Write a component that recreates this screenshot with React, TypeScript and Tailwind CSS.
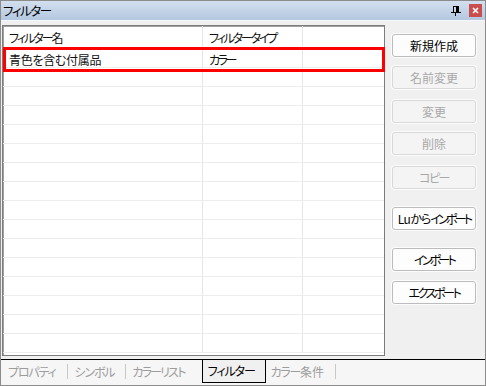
const font = "[font-family:'Noto_Sans_CJK_JP',sans-serif] [font-feature-settings:'palt']";

const rows = Array.from({ length: 15 });

function Btn(props: { children: React.ReactNode; disabled?: boolean; mt: string }) {
  return (
    <div
      className={`${props.mt} h-[23px] w-[84px] rounded-[3px] border flex items-center justify-center text-[12px] whitespace-nowrap shadow-[0_0_0_1px_#fcfcfc] ${
        props.disabled
          ? "border-[#d9d9d9] bg-[#f4f4f4] text-[#a8a8a8]"
          : "border-[#bcbcbc] bg-[#fdfdfd] text-black"
      }`}
    >
      {props.children}
    </div>
  );
}

function Sep(props: { ml: string; mr: string }) {
  return <div className={`${props.ml} ${props.mr} w-px h-[15px] bg-[#c8c8c8]`} />;
}

export default function App() {
  return (
    <div className={`w-[486px] h-[386px] border border-[#8c8c8c] flex flex-col bg-[#f0f0f0] ${font}`}>
      {/* title bar */}
      <div className="h-[20px] shrink-0 flex items-center bg-gradient-to-b from-[#d3dfee] to-[#b4c8e1] border-b border-[#f4f7fb] pl-[2px] pr-[3px]">
        <span className="pt-[1px] text-[12.5px] text-black leading-none tracking-[-1.4px]">フィルター</span>
        <div className="ml-auto flex items-center gap-[8px]">
          <svg width="10" height="10" viewBox="0 0 10 10">
            <rect x="2.5" y="0.5" width="5" height="6" fill="none" stroke="#000" />
            <rect x="5" y="1" width="2" height="5" fill="#000" />
            <rect x="0" y="6" width="10" height="1" fill="#000" />
            <rect x="4" y="7" width="1" height="3" fill="#000" />
          </svg>
          <div className="w-[13px] h-[13px] bg-[#c94f4f] flex items-center justify-center">
            <svg width="7" height="7" viewBox="0 0 7 7">
              <path d="M1 1 L6 6 M6 1 L1 6" stroke="#fff" strokeWidth="1.6" />
            </svg>
          </div>
        </div>
      </div>

      {/* main */}
      <div className="flex-1 flex pt-[4px] pl-[1px]">
        <div className="relative w-[383px] h-[331px] border border-[#7c7c7c] shadow-[inset_1px_1px_0_#a0a0a0] bg-white">
          <div className="flex h-[23px] border-b border-[#ececec] text-[12px] text-[#111]">
            <div className="w-[200px] pl-[6px] pt-[1px] flex items-center border-r border-[#e6e6e6]">
              <span className="tracking-[-2px]">フィルター</span>名
            </div>
            <div className="w-[100px] pl-[6px] pt-[1px] flex items-center border-r border-[#e6e6e6] tracking-[-2.2px]">フィルタータイプ</div>
            <div className="flex-1" />
          </div>
          <div className="flex h-[19px] border-b border-[#ececec] text-[12px] text-[#111]">
            <div className="w-[200px] pl-[6px] pt-[3px] flex items-center border-r border-[#e6e6e6] tracking-[-0.3px]">青色を含む付属品</div>
            <div className="w-[100px] pl-[6px] pt-[3px] flex items-center border-r border-[#e6e6e6] tracking-[-2.5px]">カラー</div>
            <div className="flex-1" />
          </div>
          {rows.map((_, i) => (
            <div key={i} className="flex h-[19px] border-b border-[#ececec]">
              <div className="w-[200px] border-r border-[#e6e6e6]" />
              <div className="w-[100px] border-r border-[#e6e6e6]" />
              <div className="flex-1" />
            </div>
          ))}
          <div className="absolute left-0 right-[-1px] top-[21px] h-[25px] border-[3px] border-[#ff0000]" />
        </div>

        <div className="flex flex-col pl-[7px] pt-[9px]">
          <Btn mt="mt-0">新規作成</Btn>
          <Btn disabled mt="mt-[9px]">名前変更</Btn>
          <Btn disabled mt="mt-[11px]">変更</Btn>
          <Btn disabled mt="mt-[9px]">削除</Btn>
          <Btn disabled mt="mt-[11px]">
            <span className="tracking-[-1.5px]">コピー</span>
          </Btn>
          <Btn mt="mt-[18px]">
            <span className="tracking-[-0.5px]">Lu</span>
            <span className="tracking-[-1px]">から</span>
            <span className="tracking-[-2.8px]">インポート</span>
          </Btn>
          <Btn mt="mt-[18px]">
            <span className="tracking-[-2.8px]">インポート</span>
          </Btn>
          <Btn mt="mt-[10px]">
            <span className="tracking-[-2.4px]">エクスポート</span>
          </Btn>
        </div>
      </div>

      {/* tabs */}
      <div className="h-[26px] shrink-0 border-t border-black bg-[#f6f6f6] flex items-start text-[12px] text-[#9c9c9c]">
        <div className="h-[23px] flex items-center pl-[7px]">
          <span className="tracking-[-1.2px]">プロパティ</span>
          <Sep ml="ml-[11px]" mr="mr-[7px]" />
          <span className="tracking-[-1.2px]">シンボル</span>
          <Sep ml="ml-[11px]" mr="mr-[6px]" />
          <span className="tracking-[-1.8px]">カラーリスト</span>
        </div>
        <div className="ml-[17px] h-[23px] w-[64px] border-x border-b border-black bg-[#f0f0f0] flex items-center pl-[5px] text-black tracking-[-1.1px]">
          フィルター
        </div>
        <div className="h-[23px] flex items-center pl-[5px]">
          <span className="tracking-[-1.3px]">カラー</span>
          <span>条件</span>
          <Sep ml="ml-[11px]" mr="mr-0" />
        </div>
      </div>
    </div>
  );
}
